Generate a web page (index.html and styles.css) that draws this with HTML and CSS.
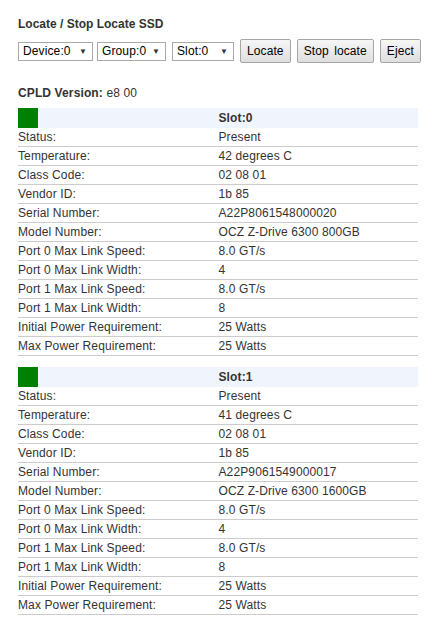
FILE: index.html
```html
<!DOCTYPE html>
<html lang="en">
<head>
  <meta charset="UTF-8" />
  <title>Locate / Stop Locate SSD</title>
  <link rel="stylesheet" href="styles.css">
</head>
<body>

  <div class="page">
    <div class="page-title">Locate / Stop Locate SSD</div>

    <div class="controls">
      <div class="select sel-device"><span>Device:0</span><span class="arrow">&#9660;</span></div>
      <div class="select sel-group"><span>Group:0</span><span class="arrow">&#9660;</span></div>
      <div class="select sel-slot"><span>Slot:0</span><span class="arrow">&#9660;</span></div>
      <button class="btn">Locate</button>
      <button class="btn">Stop locate</button>
      <button class="btn">Eject</button>
    </div>

    <div class="cpld"><b>CPLD Version:</b> e8 00</div>

    <div id="slotList"></div>
  </div>

  <script>
    const slots = [
      { slot: 0, temp: 42, serial: "A22P8061548000020", model: "OCZ Z-Drive 6300 800GB" },
      { slot: 1, temp: 41, serial: "A22P9061549000017", model: "OCZ Z-Drive 6300 1600GB" },
    ];

    const slotList = document.getElementById('slotList');

    slots.forEach((s) => {
      const rows = [
        ["Status:", "Present"],
        ["Temperature:", s.temp + " degrees C"],
        ["Class Code:", "02 08 01"],
        ["Vendor ID:", "1b 85"],
        ["Serial Number:", s.serial],
        ["Model Number:", s.model],
        ["Port 0 Max Link Speed:", "8.0 GT/s"],
        ["Port 0 Max Link Width:", "4"],
        ["Port 1 Max Link Speed:", "8.0 GT/s"],
        ["Port 1 Max Link Width:", "8"],
        ["Initial Power Requirement:", "25 Watts"],
        ["Max Power Requirement:", "25 Watts"],
      ];
      const table = document.createElement('table');
      table.className = 'slot-table';
      let html = `<tr class="head"><td><span class="led"></span></td><td>Slot:${s.slot}</td></tr>`;
      rows.forEach(r => {
        html += `<tr><td>${r[0]}</td><td>${r[1]}</td></tr>`;
      });
      table.innerHTML = html;
      slotList.appendChild(table);
    });
  </script>

</body>
</html>
```

FILE: styles.css
```css
body {
  font-family: Arial, 'Liberation Sans', sans-serif;
  font-size: 12px;
  letter-spacing: 0.12px;
  color: #333;
  margin: 0;
  padding: 0;
  background: #fff;
}

.page {
  padding: 17px 0 0 18px;
}

.page-title {
  font-weight: bold;
  font-size: 12px;
  line-height: 14px;
  letter-spacing: 0;
}

.controls {
  display: flex;
  align-items: center;
  gap: 6px;
  margin-top: 8px;
  height: 24px;
}

.select {
  display: flex;
  flex-shrink: 0;
  justify-content: space-between;
  align-items: center;
  box-sizing: border-box;
  height: 19px;
  padding: 0 5px 0 4px;
  border: 1px solid #a9a9a9;
  background: #fff;
  color: #000;
  font-size: 12px;
  white-space: nowrap;
}

.select .arrow {
  font-size: 8px;
  color: #333;
}

.sel-device { width: 75px; }
.sel-group { width: 69px; margin-left: -2px; }
.sel-slot { width: 62px; }

.btn {
  flex-shrink: 0;
  box-sizing: border-box;
  height: 24px;
  padding: 0 6px;
  font-family: Arial, 'Liberation Sans', sans-serif;
  font-size: 12px;
  letter-spacing: 0.1px;
  word-spacing: 2px;
  white-space: nowrap;
  color: #000;
  background: linear-gradient(#f6f6f6, #dedede);
  border: 1px solid #a6a6a6;
  border-radius: 2px;
}

.cpld {
  margin-top: 23px;
  line-height: 14px;
}

.slot-table {
  width: 400px;
  border-collapse: collapse;
  margin-top: 8px;
  table-layout: fixed;
}

.slot-table + .slot-table {
  margin-top: 11px;
}

.slot-table td {
  padding: 2px 0;
  line-height: 14px;
  border-bottom: 1px solid #cccccc;
  width: 50%;
}

.slot-table td:last-child {
  padding-left: 1px;
}

.slot-table tr.head td {
  background: #f0f5fd;
  border-bottom: none;
  padding: 0;
  height: 20px;
  font-weight: bold;
  vertical-align: middle;
}

.slot-table tr.head td:last-child {
  padding-left: 1px;
}

.slot-table tr.head td:first-child {
  font-size: 0;
  line-height: 0;
}

.led {
  display: inline-block;
  width: 20px;
  height: 20px;
  background: #008000;
}
```
